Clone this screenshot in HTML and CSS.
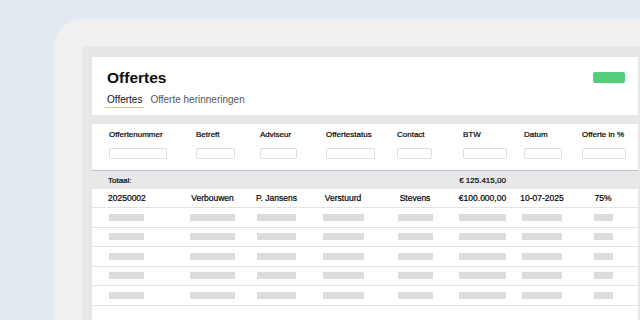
FILE: index.html
```html
<!DOCTYPE html>
<html lang="nl">
<head>
    <meta charset="UTF-8">
    <title>Offertes</title>
    <link rel="stylesheet" href="styles.css">
</head>
<body>

<div class="frame">
    <div class="app">

        <!-- Page header -->
        <div class="page-head">
            <div>
                <h1 class="title">Offertes</h1>
                <div class="tabs">
                    <span class="tab active">Offertes</span>
                    <span class="tab">Offerte herinneringen</span>
                </div>
            </div>
            <a class="btn-new"></a>
        </div>

        <!-- Table -->
        <div class="table-card">
            <div class="row head">
                <div class="cell"><span>Offertenummer</span><input class="filter" type="text"></div>
                <div class="cell"><span>Betreft</span><input class="filter" type="text"></div>
                <div class="cell"><span>Adviseur</span><input class="filter" type="text"></div>
                <div class="cell"><span>Offertestatus</span><input class="filter" type="text"></div>
                <div class="cell"><span>Contact</span><input class="filter" type="text"></div>
                <div class="cell"><span>BTW</span><input class="filter" type="text"></div>
                <div class="cell"><span>Datum</span><input class="filter" type="text"></div>
                <div class="cell"><span>Offerte in %</span><input class="filter" type="text"></div>
            </div>

            <div class="row total">
                <div class="cell">Totaal:</div>
                <div class="cell"></div>
                <div class="cell"></div>
                <div class="cell"></div>
                <div class="cell"></div>
                <div class="cell">€ 125.415,00</div>
                <div class="cell"></div>
                <div class="cell"></div>
            </div>

            <div class="row data">
                <div class="cell">20250002</div>
                <div class="cell">Verbouwen</div>
                <div class="cell">P. Jansens</div>
                <div class="cell">Verstuurd</div>
                <div class="cell">Stevens</div>
                <div class="cell">€100.000,00</div>
                <div class="cell">10-07-2025</div>
                <div class="cell">75%</div>
            </div>

            <div class="row skeleton">
                <div class="cell"><i class="bar"></i></div><div class="cell"><i class="bar"></i></div><div class="cell"><i class="bar"></i></div><div class="cell"><i class="bar"></i></div>
                <div class="cell"><i class="bar"></i></div><div class="cell"><i class="bar"></i></div><div class="cell"><i class="bar"></i></div><div class="cell"><i class="bar"></i></div>
            </div>
            <div class="row skeleton">
                <div class="cell"><i class="bar"></i></div><div class="cell"><i class="bar"></i></div><div class="cell"><i class="bar"></i></div><div class="cell"><i class="bar"></i></div>
                <div class="cell"><i class="bar"></i></div><div class="cell"><i class="bar"></i></div><div class="cell"><i class="bar"></i></div><div class="cell"><i class="bar"></i></div>
            </div>
            <div class="row skeleton">
                <div class="cell"><i class="bar"></i></div><div class="cell"><i class="bar"></i></div><div class="cell"><i class="bar"></i></div><div class="cell"><i class="bar"></i></div>
                <div class="cell"><i class="bar"></i></div><div class="cell"><i class="bar"></i></div><div class="cell"><i class="bar"></i></div><div class="cell"><i class="bar"></i></div>
            </div>
            <div class="row skeleton">
                <div class="cell"><i class="bar"></i></div><div class="cell"><i class="bar"></i></div><div class="cell"><i class="bar"></i></div><div class="cell"><i class="bar"></i></div>
                <div class="cell"><i class="bar"></i></div><div class="cell"><i class="bar"></i></div><div class="cell"><i class="bar"></i></div><div class="cell"><i class="bar"></i></div>
            </div>
            <div class="row skeleton">
                <div class="cell"><i class="bar"></i></div><div class="cell"><i class="bar"></i></div><div class="cell"><i class="bar"></i></div><div class="cell"><i class="bar"></i></div>
                <div class="cell"><i class="bar"></i></div><div class="cell"><i class="bar"></i></div><div class="cell"><i class="bar"></i></div><div class="cell"><i class="bar"></i></div>
            </div>
        </div>

    </div>
</div>

</body>
</html>
```

FILE: styles.css
```css
html, body {
    height: 100%;
}

body {
    margin: 0;
    background-color: #e2e9f1;
    font-family: "Liberation Sans", Arial, sans-serif;
    color: #111;
    overflow: hidden;
}

/* Outer device frame */
.frame {
    margin: 19px 0 0 53px;
    height: calc(100% - 19px);
    padding: 27px 0 0 29px;
    box-sizing: border-box;
    background-color: #f0f0f0;
    border-top-left-radius: 30px;
}

.app {
    height: 100%;
    padding: 11px 2px 0 10px;
    box-sizing: border-box;
    background-color: #e7e7e5;
    display: flex;
    flex-direction: column;
    gap: 9px;
}

/* Header card */
.page-head {
    background-color: #fff;
    height: 58px;
    padding: 11px 13px 0 15px;
    box-sizing: border-box;
    display: flex;
    justify-content: space-between;
    align-items: flex-start;
}

.title {
    margin: 0;
    font-size: 15.5px;
    line-height: 20px;
    font-weight: bold;
    color: #0d0d0d;
}

.tabs {
    display: flex;
    gap: 6px;
    margin-top: 5px;
}

.tab {
    font-size: 10px;
    line-height: 14px;
    color: #555;
}

.tab.active {
    color: #111;
    padding: 0 2px;
    margin-left: -2px;
    border-bottom: 1px solid #dcc888; /* goldish underline */
}

.btn-new {
    display: block;
    width: 32px;
    height: 11px;
    margin-top: 4px;
    background-color: #52ce7a;
    border-radius: 2px;
}

/* Table card */
.table-card {
    flex: 1;
    background-color: #fff;
    padding-left: 17px;
}

.row {
    display: grid;
    grid-template-columns: 87px 64px 66px 71px 66px 61px 58px 56px;
    margin-left: -17px;
    padding-left: 17px;
    font-size: 8px;
    color: #000;
    -webkit-text-stroke: 0.2px #000; /* heavier small text */
}

.row.head {
    padding-top: 6px;
    padding-bottom: 11px;
    border-bottom: 1px solid #b5c3d1;
}

.head .cell {
    display: flex;
    flex-direction: column;
    align-items: flex-start;
    gap: 8px;
    line-height: 10px;
}

.filter {
    height: 11px;
    padding: 0;
    margin: 0;
    box-sizing: border-box;
    border: 1px solid #dedede;
    border-radius: 2px;
    background-color: #fff;
}

.head .cell:nth-child(1) .filter { width: 58px; }
.head .cell:nth-child(2) .filter { width: 39px; }
.head .cell:nth-child(3) .filter { width: 37px; }
.head .cell:nth-child(4) .filter { width: 49px; }
.head .cell:nth-child(5) .filter { width: 35px; }
.head .cell:nth-child(6) .filter { width: 44px; }
.head .cell:nth-child(7) .filter { width: 38px; }
.head .cell:nth-child(8) .filter { width: 44px; }

/* Body rows: cells centred on their filter */
.total .cell,
.data .cell,
.skeleton .cell {
    display: flex;
    justify-content: center;
    align-items: center;
    white-space: nowrap;
}

.total .cell:nth-child(1),
.data .cell:nth-child(1),
.skeleton .cell:nth-child(1) {
    justify-content: flex-start;
    margin-left: -1px;
}

.skeleton .cell:nth-child(1) { margin-left: 0; }

.row .cell:nth-child(2) { width: 33px; }
.row .cell:nth-child(3) { width: 33px; }
.row .cell:nth-child(4) { width: 34px; }
.row .cell:nth-child(5) { width: 36px; }
.row .cell:nth-child(6) { width: 39px; }
.row .cell:nth-child(7) { width: 36px; }
.row .cell:nth-child(8) { width: 42px; }
.head .cell:nth-child(n) { width: auto; }

.row.total {
    height: 18px;
    background-color: #e8e8e8;
}

.row.data {
    height: 18px;
    border-bottom: 1px solid #e4e4e4;
    font-size: 8.5px;
}

.row.skeleton {
    height: 18.5px;
    border-bottom: 1px solid #e4e4e4;
}

.bar {
    display: block;
    height: 7px;
    background-color: #dddcdc;
    flex-shrink: 0;
}

.skeleton .cell:nth-child(1) .bar { width: 35px; }
.skeleton .cell:nth-child(2) .bar { width: 45px; }
.skeleton .cell:nth-child(3) .bar { width: 39px; }
.skeleton .cell:nth-child(4) .bar { width: 41px; }
.skeleton .cell:nth-child(5) .bar { width: 35px; }
.skeleton .cell:nth-child(6) .bar { width: 47px; }
.skeleton .cell:nth-child(7) .bar { width: 40px; }
.skeleton .cell:nth-child(8) .bar { width: 19px; }
```
